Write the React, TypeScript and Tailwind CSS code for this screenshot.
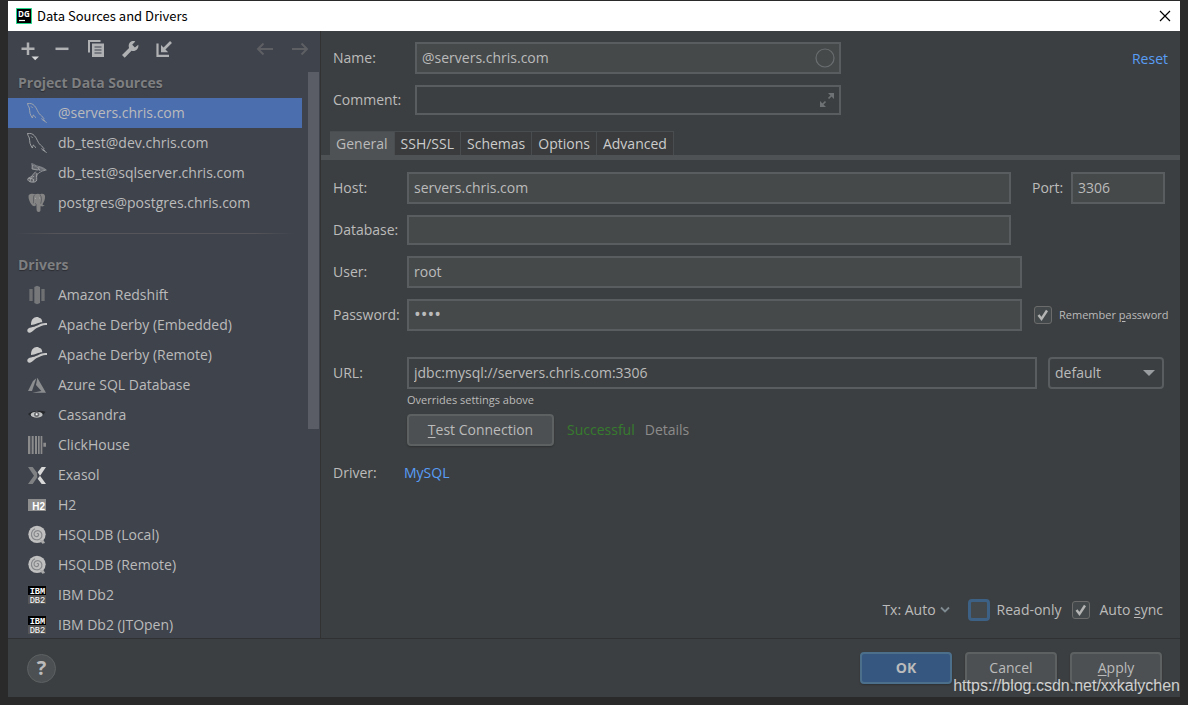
import { useState, type ReactNode } from "react";

const mysqlIcon = (
  <g fill="none" stroke="currentColor" strokeWidth="2.6" strokeLinecap="round" strokeLinejoin="round">
    <path d="M2 2c8-2 15 0 20 6 6 6 8 13 12 20 4 7 9 10 14 15 3 3 4 6 1 7l9 9" />
    <path d="M2 2c-1 4 3 8 5 13 2 6 0 10 2 16 2 5 4 10 7 14 2-3 1-7 3-9 3 1 4 6 7 8" />
    <path d="M44 47c0 4 6 5 9 7" />
    <path d="M13 11l3 3" />
  </g>
);

const sqlServerIcon = (
  <g fill="none" stroke="currentColor" strokeLinejoin="round">
    <path d="M14 2c8 1 11 7 20 8 9 2 17 5 24 11-8 2-16 4-22 8-4 3-6 7-8 12M14 2c3 6 1 11 1 16 6 2 12 1 17 3" strokeWidth="2" />
    <path d="M16 6c8 3 16 5 22 14-8 1-16 0-22-3zM34 12c6 2 14 4 20 9-8 1-12 1-18 1z" fill="#8b8d8f" fillOpacity=".5" strokeWidth="1.5" />
    <path
      d="M26 26c-5 6-10 10-14 16-4 1-9 2-10 7 1 5 5 7 10 8 6 1 12 1 16-3 3-6-1-14 2-24"
      fill="#8b8d8f"
      fillOpacity=".4"
      strokeWidth="2.5"
    />
    <path d="M4 47c6-1 12-1 17 4M9 56c0-8 5-14 12-16M20 50l-2 7" strokeWidth="2.5" />
  </g>
);

const postgresIcon = (
  <g>
    <path
      d="M5 7C10 1 20 2 24 4c6-2 12-2 16 0 6-3 13-1 14 5 1 9-3 18-7 24-1 3 2 4 6 4-3 4-9 4-12 2-1 6 0 12-1 15-2 4-7 4-10 1-2-5-1-12-2-18-4 3-8 3-11 1C10 32 3 18 5 7z"
      fill="#848484"
    />
    <path d="M22 6c-5 8-1 16-3 25M39 5c5 7 6 15 2 27M28 38c1-4-2-6-4-7" fill="none" stroke="#4b4e55" strokeWidth="2" />
    <path d="M24 16h3M36 15h3" stroke="#c0c0c0" strokeWidth="2" />
  </g>
);

const redshiftIcon = (
  <g fill="#6e7072">
    <path d="M7 12h10v36H7zM43 12h10v36H43z" />
    <path d="M22 6l8-4 9 4v48l-9 4-8-4z" fill="#76787a" />
  </g>
);

const derbyIcon = (
  <g fill="#c9c9c9">
    <path d="M12 30c0-12 4-21 14-23 7-2 8 1 12 2 6 1 7 7 8 13-12 0-20 8-34 8z" />
    <path d="M1 44c4-6 9-6 16-8 16-3 24-14 43-12v6c-13-1-19 4-31 9-8 4-11 12-20 14-5 1-9-3-8-9z" />
  </g>
);

const azureIcon = (
  <g fill="#8b8d8f">
    <path d="M28 10L18 18 3 48h12z" />
    <path d="M31 8L57 53H16l27-5-16-18z" />
  </g>
);

const cassandraIcon = (
  <g>
    <path d="M3 27c10-9 36-12 53-7-7 8-13 19-27 19C16 39 9 33 3 27z" fill="#25272b" />
    <ellipse cx="29" cy="29" rx="18" ry="9" fill="#bfc1c2" />
    <circle cx="29" cy="28" r="8" fill="#6a6c70" />
    <circle cx="29" cy="28" r="3" fill="#fff" />
  </g>
);

const clickhouseIcon = (
  <g fill="#8b8b8b">
    <path d="M3 3h7v54H3zM14 3h6v54h-6zM24 3h6v54h-6zM33 3h5v54h-5zM41 3h5v54h-5zM49 23h8v12h-8z" />
  </g>
);

const exasolIcon = (
  <g>
    <path d="M3 6h14l13 17 1 14-14 20H3l18-25z" fill="#7f8183" />
    <path d="M57 6H44L32 22l7 10 4-5zM57 57H44L32 41l7-9z" fill="#d8d8d8" />
  </g>
);

const h2Icon = (
  <g>
    <path d="M3 12h54v36H3z" fill="#8e8e8e" />
    <text x="16" y="44" fontSize="30" fontWeight="bold" fill="#fff" fontFamily="Liberation Sans, sans-serif">
      H2
    </text>
  </g>
);

const hsqldbIcon = (
  <g>
    <circle cx="30" cy="28" r="26" fill="#c0c0c0" />
    <path
      d="M30 27c2-4 7 0 4 5-3 5-13 3-13-5 0-8 9-12 16-9 9 4 10 15 4 22-6 6-18 6-24-1-7-9-4-23 7-28"
      fill="none"
      stroke="#85878a"
      strokeWidth="3.5"
    />
    <path d="M38 46l8 10 8-2-4-8z" fill="#a9a9a9" />
  </g>
);

const db2Icon = (
  <g fill="#fff" fontFamily="Liberation Mono, monospace">
    <path d="M3 3h54v27H3z" fill="#000" />
    <path d="M3 30h54v27H3z" fill="#565656" />
    <text x="8" y="26" fontSize="26" fontWeight="bold">
      IBM
    </text>
    <text x="8" y="53" fontSize="26">
      DB2
    </text>
  </g>
);

const dataSources = [
  { name: "@servers.chris.com", icon: mysqlIcon },
  { name: "db_test@dev.chris.com", icon: mysqlIcon },
  { name: "db_test@sqlserver.chris.com", icon: sqlServerIcon },
  { name: "postgres@postgres.chris.com", icon: postgresIcon },
];

const drivers = [
  { name: "Amazon Redshift", icon: redshiftIcon },
  { name: "Apache Derby (Embedded)", icon: derbyIcon },
  { name: "Apache Derby (Remote)", icon: derbyIcon },
  { name: "Azure SQL Database", icon: azureIcon },
  { name: "Cassandra", icon: cassandraIcon },
  { name: "ClickHouse", icon: clickhouseIcon },
  { name: "Exasol", icon: exasolIcon },
  { name: "H2", icon: h2Icon },
  { name: "HSQLDB (Local)", icon: hsqldbIcon },
  { name: "HSQLDB (Remote)", icon: hsqldbIcon },
  { name: "IBM Db2", icon: db2Icon },
  { name: "IBM Db2 (JTOpen)", icon: db2Icon },
];

const tabs = ["General", "SSH/SSL", "Schemas", "Options", "Advanced"];

const inputBase = "min-w-0 rounded-none border-2 border-[#5a5d5f] px-[5px] pb-[2px] text-[#bbbbbb] outline-none";
const buttonBase = "h-8 rounded border-2 text-[#bbbbbb] shadow-[0_1px_2px_rgba(0,0,0,0.25)]";

function ListItem({
  name,
  icon,
  selected,
  onSelect,
}: {
  name: string;
  icon: ReactNode;
  selected: boolean;
  onSelect: () => void;
}) {
  return (
    <li>
      <button
        onClick={onSelect}
        className={`flex h-[30px] w-full items-center gap-[11px] pl-[19px] text-left whitespace-nowrap ${
          selected ? "bg-[#4b6eaf]" : ""
        }`}
      >
        <svg viewBox="0 0 60 60" className="size-5 shrink-0 text-[#a9abad]">
          {icon}
        </svg>
        {name}
      </button>
    </li>
  );
}

function Field({ id, label, children }: { id: string; label: string; children: ReactNode }) {
  return (
    <div className="flex items-center">
      <label htmlFor={id} className="w-[74px] shrink-0">
        {label}
      </label>
      {children}
    </div>
  );
}

function Checkbox({ id, defaultChecked }: { id: string; defaultChecked?: boolean }) {
  return (
    <span className="relative flex size-[18px] shrink-0">
      <input
        id={id}
        type="checkbox"
        defaultChecked={defaultChecked}
        className="peer size-full appearance-none rounded-[3px] border border-[#6b6b6b] bg-[#43494a]"
      />
      <svg viewBox="0 0 18 18" className="pointer-events-none invisible absolute inset-0 peer-checked:visible">
        <path d="M4.5 9l3 4L13 4.5" fill="none" stroke="#b4b4b4" strokeWidth="2.4" />
      </svg>
    </span>
  );
}

function Toolbar() {
  return (
    <div className="flex h-9 shrink-0 items-center gap-[14px] pr-[10px] pl-[11px] text-[#afb1b3]">
      <button aria-label="Add">
        <svg viewBox="0 0 20 20" className="size-5 overflow-visible">
          <path d="M9 3.500v12.500M2.500 9.800h13" stroke="currentColor" strokeWidth="2.5" />
          <path d="M12.500 17.500h7.500l-3.800 3.800z" fill="#d6d7d8" />
        </svg>
      </button>
      <button aria-label="Remove">
        <svg viewBox="0 0 20 20" className="size-5">
          <path d="M2.500 9.800h13" stroke="currentColor" strokeWidth="2.5" />
        </svg>
      </button>
      <button aria-label="Duplicate">
        <svg viewBox="0 0 20 20" className="size-5">
          <path d="M2 13.500V2h11.500" fill="none" stroke="currentColor" strokeWidth="2" />
          <path
            d="M5 4.500h12v13.500H5zM7.500 7.500v1h7v-1zM7.500 10.500v1h7v-1zM7.500 13.500v1h7v-1z"
            fill="currentColor"
            fillRule="evenodd"
          />
        </svg>
      </button>
      <button aria-label="Properties">
        <svg viewBox="0 0 20 20" className="size-5">
          <path
            d="M17.300 5.700l-3.400 2.700-2.700-2.700L14.300 2.500c-3-1.300-6.700.7-6.600 4.600 0 .8.200 1.400.4 2L1 16 3.700 18.700 10.500 11.700c3.800 1.300 7.600-2 6.800-6z"
            fill="currentColor"
          />
        </svg>
      </button>
      <button aria-label="Make global">
        <svg viewBox="0 0 20 20" className="size-5">
          <path d="M2.500 4.500v12.300H14" fill="none" stroke="currentColor" strokeWidth="2.2" />
          <path d="M16 3L8.500 10.500" stroke="currentColor" strokeWidth="2.6" />
          <path d="M6 6v7.200h7.200z" fill="currentColor" />
        </svg>
      </button>
      <div className="ml-auto flex gap-[15px] text-[#5d5f63]">
        <button aria-label="Back">
          <svg viewBox="0 0 20 20" className="size-5">
            <path d="M18 10H3M8.500 4.500L3 10l5.500 5.500" fill="none" stroke="currentColor" strokeWidth="2" />
          </svg>
        </button>
        <button aria-label="Forward">
          <svg viewBox="0 0 20 20" className="size-5">
            <path d="M2 10h15M11.500 4.500L17 10l-5.500 5.500" fill="none" stroke="currentColor" strokeWidth="2" />
          </svg>
        </button>
      </div>
    </div>
  );
}

export default function App() {
  const [selected, setSelected] = useState(dataSources[0].name);
  const [tab, setTab] = useState("General");

  return (
    <div className="relative flex h-screen flex-col bg-[#2a2a2b] px-2 pt-px pb-2 font-['Open_Sans',sans-serif] text-sm leading-5 text-[#bbbbbb]">
      {/* Title bar */}
      <header className="flex h-[30px] shrink-0 items-center bg-white px-2 text-black">
        <svg viewBox="0 0 16 16" className="mr-[5px] size-4">
          <path d="M.5.5h15v15H.5z" fill="#000" stroke="#21d789" />
          <text x="2" y="8.500" fontSize="8" fontWeight="bold" fill="#fff" fontFamily="Open Sans, sans-serif">
            DG
          </text>
          <path d="M3 12.500h6" stroke="#fff" strokeWidth="1.2" />
        </svg>
        <h1 className="font-['Noto_Sans_CJK_SC',sans-serif] text-[13px]">Data Sources and Drivers</h1>
        <button aria-label="Close" className="ml-auto">
          <svg viewBox="0 0 14 14" className="size-[14px]">
            <path d="M2 2l10 10M12 2L2 12" stroke="#000" strokeWidth="1.2" />
          </svg>
        </button>
      </header>

      <div className="flex min-h-0 flex-1">
        {/* Sidebar */}
        <aside className="flex w-[313px] shrink-0 flex-col border-r border-[#323232] bg-[#3f434c]">
          <Toolbar />
          <div className="flex min-h-0 flex-1 pr-px">
            <div className="min-w-0 flex-1 overflow-hidden pt-px">
              <h2 className="flex h-[30px] items-center pl-[10px] font-bold text-[#7e7f81] [text-shadow:0_1px_1px_#2c2e33]">
                Project Data Sources
              </h2>
              <ul>
                {dataSources.map((d) => (
                  <ListItem
                    key={d.name}
                    name={d.name}
                    icon={d.icon}
                    selected={selected === d.name}
                    onSelect={() => setSelected(d.name)}
                  />
                ))}
              </ul>
              <div className="mx-2 mt-[15px] mb-4 h-px bg-[linear-gradient(to_right,transparent,#56565a_15%,#56565a_85%,transparent)]" />
              <h2 className="flex h-[30px] items-center pl-[10px] font-bold text-[#7e7f81] [text-shadow:0_1px_1px_#2c2e33]">
                Drivers
              </h2>
              <ul>
                {drivers.map((d) => (
                  <ListItem
                    key={d.name}
                    name={d.name}
                    icon={d.icon}
                    selected={selected === d.name}
                    onSelect={() => setSelected(d.name)}
                  />
                ))}
              </ul>
            </div>
            <div className="ml-[6px] w-[11px] shrink-0 pt-[5px]">
              <div className="h-[63%] bg-[#5a5d66]" />
            </div>
          </div>
        </aside>

        {/* Settings */}
        <main className="flex min-w-0 flex-1 flex-col bg-[#3c3f41]">
          <div className="flex items-start justify-between px-3 pt-[11px]">
            <div className="flex w-[508px] flex-col gap-[11px]">
              <div className="flex items-center">
                <label htmlFor="name" className="w-[82px] shrink-0">
                  Name:
                </label>
                <div className="relative flex flex-1">
                  <input id="name" defaultValue="@servers.chris.com" className={`h-8 flex-1 bg-[#45494a] ${inputBase}`} />
                  <svg viewBox="0 0 20 20" className="absolute top-[6px] right-[6px] size-5">
                    <circle cx="10" cy="10" r="9" fill="none" stroke="#6a6d6f" strokeWidth="1.2" />
                  </svg>
                </div>
              </div>
              <div className="flex items-center">
                <label htmlFor="comment" className="w-[82px] shrink-0">
                  Comment:
                </label>
                <div className="relative flex flex-1">
                  <input id="comment" className={`h-[30px] flex-1 bg-[#3c3f41] ${inputBase}`} />
                  <svg viewBox="0 0 16 16" className="absolute top-[7px] right-[6px] size-4" fill="#6f7274">
                    <path d="M9 1h6v6zM1 9v6h6z" />
                    <path d="M12.500 3.500L9.500 6.500M3.500 12.500l3-3" stroke="#6f7274" strokeWidth="1.6" />
                  </svg>
                </div>
              </div>
            </div>
            <a href="#reset" className="mt-[7px] text-[#589df6]">
              Reset
            </a>
          </div>

          <div role="tablist" className="mt-4 flex pl-[9px]">
            {tabs.map((t) => (
              <button
                key={t}
                role="tab"
                aria-selected={tab === t}
                onClick={() => setTab(t)}
                className={`h-6 border-t border-r border-[#4a4d4f] px-[6px] ${
                  tab === t ? "bg-[#4e5254]" : "bg-[#393b3d] text-[#cccccc]"
                }`}
              >
                {t}
              </button>
            ))}
          </div>
          <div className="h-[5px] bg-[#4e5254]" />

          <div className="flex flex-1 flex-col px-3 pt-3">
            <div className="flex flex-col gap-[11px]">
              <Field id="host" label="Host:">
                <input id="host" defaultValue="servers.chris.com" className={`h-8 flex-1 bg-[#45494a] ${inputBase}`} />
                <label htmlFor="port" className="ml-[21px] w-[39px]">
                  Port:
                </label>
                <input id="port" defaultValue="3306" className={`mr-[3px] h-8 w-[94px] bg-[#45494a] ${inputBase}`} />
              </Field>
              <Field id="database" label="Database:">
                <input id="database" className={`mr-[157px] h-[30px] flex-1 bg-[#45494a] ${inputBase}`} />
              </Field>
              <Field id="user" label="User:">
                <input id="user" defaultValue="root" className={`mr-[146px] h-8 flex-1 bg-[#45494a] ${inputBase}`} />
              </Field>
              <Field id="password" label="Password:">
                <input
                  id="password"
                  type="password"
                  defaultValue="root"
                  className={`h-8 flex-1 bg-[#45494a] text-lg ${inputBase}`}
                />
                <div className="ml-3 flex w-[134px] items-center gap-[7px]">
                  <Checkbox id="remember" defaultChecked />
                  <label htmlFor="remember" className="text-[11px] whitespace-nowrap">
                    Remember <u className="underline-offset-2">p</u>assword
                  </label>
                </div>
              </Field>
            </div>

            <div className="mt-[26px]">
              <Field id="url" label="URL:">
                <input
                  id="url"
                  defaultValue="jdbc:mysql://servers.chris.com:3306"
                  className={`h-8 flex-1 bg-[#3c3f41] ${inputBase}`}
                />
                <div className="relative mr-1 ml-[11px] flex w-[116px]">
                  <select
                    aria-label="URL type"
                    className="h-8 w-full appearance-none rounded border-2 border-[#5a5d5f] bg-[#3c3f41] pl-[5px]"
                  >
                    <option>default</option>
                  </select>
                  <svg viewBox="0 0 12 6" className="pointer-events-none absolute top-[13px] right-[9px] h-[6px] w-3">
                    <path d="M0 0h12L6 6z" fill="#9a9da0" />
                  </svg>
                </div>
              </Field>
            </div>

            <div className="ml-[74px]">
              <p className="mt-px text-[11px] leading-5">Overrides settings above</p>
              <div className="mt-1 flex items-center">
                <button className={`w-[147px] border-[#5e6162] bg-[#4c5052] ${buttonBase}`}>
                  <u className="underline-offset-2">T</u>est Connection
                </button>
                <span className="ml-[13px] text-[#367c2e]">Successful</span>
                <a href="#details" className="ml-[10px] text-[#8c8c8c]">
                  Details
                </a>
              </div>
            </div>

            <div className="mt-[17px] flex">
              <span className="w-[71px]">Driver:</span>
              <a href="#mysql" className="text-[#589df6]">
                MySQL
              </a>
            </div>

            <div className="mt-auto mb-[17px] flex items-center justify-end pr-[5px]">
              <button className="mr-[18px] flex items-center gap-1">
                Tx: Auto
                <svg viewBox="0 0 10 8" className="h-2 w-[10px]">
                  <path d="M1 1.500l4 4 4-4" fill="none" stroke="#7f8b91" strokeWidth="1.8" />
                </svg>
              </button>
              <input
                id="readonly"
                type="checkbox"
                className="size-[22px] appearance-none rounded-[4px] border-3 border-[#3d6185] bg-[#43494a]"
              />
              <label htmlFor="readonly" className="mr-[10px] ml-[7px]">
                Read-only
              </label>
              <Checkbox id="sync" defaultChecked />
              <label htmlFor="sync" className="ml-[10px]">
                Auto <u className="underline-offset-2">s</u>ync
              </label>
            </div>
          </div>
        </main>
      </div>

      {/* Footer */}
      <footer className="flex h-[59px] shrink-0 items-center gap-[13px] border-t border-[#2f3133] bg-[#3c3f41] pr-[18px] pl-[19px]">
        <button
          aria-label="Help"
          className="mr-auto size-[29px] rounded-full border border-[#5e6162] bg-[#4c5052] text-xl leading-[26px] font-bold text-[#bbbbbb]"
        >
          ?
        </button>
        <button className={`w-[92px] border-[#4c708c] bg-[#365880] font-bold ${buttonBase}`}>OK</button>
        <button className={`w-[92px] border-[#5e6162] bg-[#4c5052] ${buttonBase}`}>Cancel</button>
        <button className={`w-[92px] border-[#5e6162] bg-[#4c5052] ${buttonBase}`}>
          <u className="underline-offset-2">A</u>pply
        </button>
      </footer>

      <span className="pointer-events-none absolute right-2 bottom-[7px] font-['Liberation_Sans',Arial,sans-serif] text-base leading-6 text-white/75">
        https://blog.csdn.net/xxkalychen
      </span>
    </div>
  );
}
